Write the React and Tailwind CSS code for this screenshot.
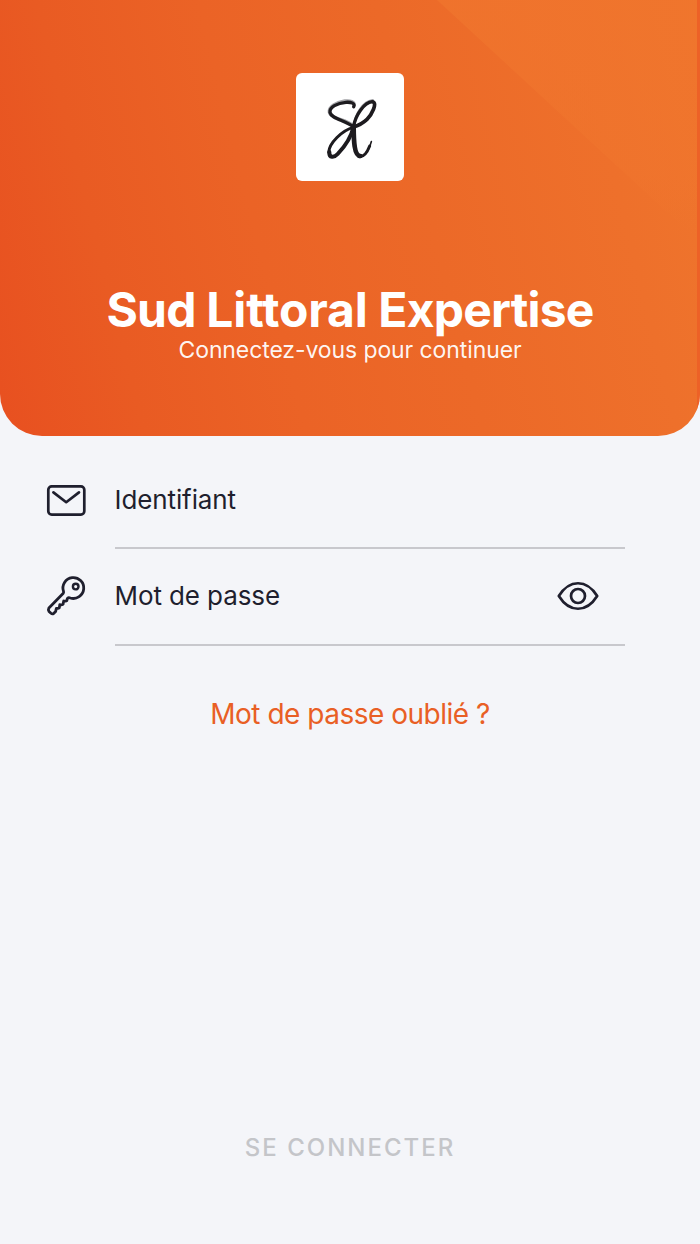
import React from 'react';

const Logo = () => (
  <div className="w-[108px] h-[108px] rounded-md bg-white overflow-hidden">
    <svg viewBox="18 20 324 324" className="w-full h-full" fill="none" strokeLinecap="round" strokeLinejoin="round">
      <g stroke="#a3a3a6" strokeWidth="8">
        <path d="M194 117C194 105 181 101 164 103C137 107 115 121 117 137C120 158 168 156 189 177" />
        <path d="M193 174C196 146 219 105 248 102" />
      </g>
      <g stroke="#1d1b1f">
        <path strokeWidth="10" d="M191 121C196 111 184 107 168 108C142 110 118 122 120 138C124 158 168 162 189 181" />
        <path strokeWidth="9" d="M189 183C156 193 118 229 116 258" />
        <path strokeWidth="12" d="M118 257C117 275 132 275 143 263C165 240 184 211 191 180" />
        <path strokeWidth="10" d="M191 180C196 148 222 108 247 106" />
        <path strokeWidth="11" d="M249 107C262 110 246 145 231 159C218 171 205 178 190 182" />
        <path strokeWidth="14" d="M191 180C191 220 192 269 211 269" />
        <path strokeWidth="9" d="M209 271C224 272 234 252 239 239" />
        <path strokeWidth="5" d="M235 249C239 241 242 234 244 226" />
      </g>
    </svg>
  </div>
);

const MailIcon = () => (
  <svg width="40" height="32" viewBox="0 0 40 32" fill="none" stroke="#1f1f2e" strokeWidth="2.7" strokeLinecap="round" strokeLinejoin="round">
    <rect x="2.3" y="1.4" width="36" height="28.2" rx="3.4" />
    <path d="M7.4 7.4L20.2 17.2L33 7.4" />
  </svg>
);

const KeyIcon = () => (
  <svg className="overflow-visible" width="40" height="40" viewBox="0 0.4 40 40" fill="none" stroke="#1f1f2e" strokeWidth="2.8" strokeLinecap="round" strokeLinejoin="round">
    <path d="M17.5 14.8A10.4 10.4 0 1 1 24.3 21.4Q22.6 20.6 21.4 21.8L20.8 24.1Q20.3 24.9 17.7 24.4L17 27.8Q16.6 28.5 13.8 28L13.3 31.2Q12.9 32 10.3 31.9L9.6 35L7.6 37Q6.3 37.8 5 36.7L3 34.8Q1.9 33.2 2.9 31.3L17.3 16.6Q17.8 15.9 17.5 14.8Z" />
    <circle cx="29.7" cy="10" r="2.8" strokeWidth="2.4" />
  </svg>
);

const EyeIcon = () => (
  <svg width="42" height="30" viewBox="0 0 42 30" fill="none" stroke="#1f1f2e" strokeWidth="2.7" strokeLinejoin="round">
    <path d="M1.8 15C12.5-2 29.5-2 40.2 15C29.5 32 12.5 32 1.8 15Z" />
    <circle cx="21" cy="15" r="7" />
  </svg>
);

const Header = () => (
  <header className="relative h-[436px] shrink-0 overflow-hidden rounded-b-[42px] flex flex-col items-center pt-[73px] bg-[linear-gradient(76deg,#e85020_0%,#e95b23_18%,#eb6326_38%,#ec6928_60%,#ee702b_84%,#ef762d_100%)]">
    <svg className="absolute inset-0" width="700" height="436" viewBox="0 0 700 436">
      <defs>
        <linearGradient id="shine" x1="0" y1="0" x2="0" y2="1">
          <stop offset="0" stopColor="#f0752d" stopOpacity="0.75" />
          <stop offset="0.7" stopColor="#f0752d" stopOpacity="0.55" />
          <stop offset="1" stopColor="#f0752d" stopOpacity="0" />
        </linearGradient>
      </defs>
      <path d="M437 0L630 178L697 240V0Z" fill="url(#shine)" />
      <rect x="697" width="3" height="436" fill="#ed6127" />
    </svg>
    <div className="relative flex flex-col items-center">
      <Logo />
      <h1 className="mt-[105px] h-12 text-[48px] leading-[48px] font-bold tracking-[-0.8px] text-white whitespace-nowrap">
        Sud <span className="tracking-[-0.1px]">Littoral</span> Expertise
      </h1>
      <p className="mt-1 h-6 text-[23px] leading-6 tracking-[-0.1px] text-white/95 whitespace-nowrap">
        Connectez-vous pour continuer
      </p>
    </div>
  </header>
);

const Field = ({ icon, label, action }) => (
  <div className="flex h-[96.5px]">
    <div className="w-[69px] shrink-0 flex items-center">{icon}</div>
    <div className="w-[510px] flex items-center justify-between border-b-2 border-[#c8c8cd] pr-[26px]">
      <span className="-ml-[0.5px] text-[26px] leading-8 tracking-[-0.1px] text-[#1f1f2e] whitespace-nowrap">{label}</span>
      {action}
    </div>
  </div>
);

export default function App() {
  return (
    <div className="w-[700px] h-[1244px] flex flex-col overflow-hidden bg-[#f4f5f9] font-['Inter',sans-serif]">
      <Header />
      <main className="flex-1 flex flex-col pl-[46px] pt-[16.5px]">
        <Field icon={<MailIcon />} label="Identifiant" />
        <Field
          icon={<KeyIcon />}
          label="Mot de passe"
          action={<button type="button" aria-label="Afficher le mot de passe"><EyeIcon /></button>}
        />
        <button type="button" className="mt-[50px] -ml-[46px] text-[28px] leading-9 tracking-[-0.5px] text-[#e95f25]">
          Mot de passe oublié ?
        </button>
        <button type="button" disabled className="mt-auto mb-20 -ml-[46px] text-[24px] leading-8 font-medium tracking-[2px] text-[#c4c5c9]">
          SE CONNECTER
        </button>
      </main>
    </div>
  );
}
